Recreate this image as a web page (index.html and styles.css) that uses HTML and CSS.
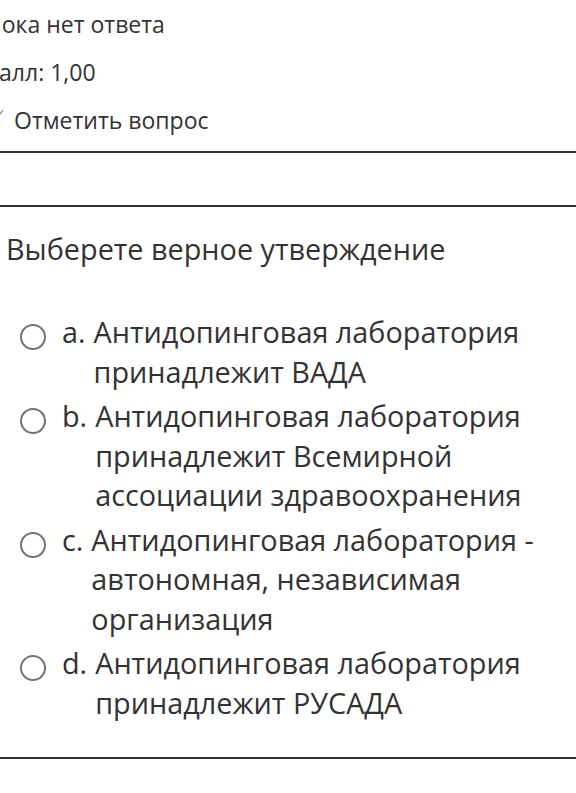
FILE: index.html
```html
<!DOCTYPE html>
<html lang="ru">
<head>
<meta charset="utf-8">
<link rel="stylesheet" href="styles.css">
</head>
<body>
<div class="info">
  <div class="state">Пока нет ответа</div>
  <div class="grade">Балл: 1,00</div>
  <div class="flag">
    <svg class="flag-icon" width="20" height="12" viewBox="0 0 20 12"><path d="M8 2 L12 9 L18 1" fill="none" stroke="#9a9a9a" stroke-width="1.4"/></svg>
    <span>Отметить вопрос</span>
  </div>
</div>
<div class="rule"></div>
<div class="gap"></div>
<div class="rule"></div>
<div class="content">
  <div class="qtext">Выберете верное утверждение</div>
  <div class="answers">
    <div class="option"><span class="radio"></span><span class="num">a.</span><div class="label">Антидопинговая лаборатория принадлежит ВАДА</div></div>
    <div class="option"><span class="radio"></span><span class="num">b.</span><div class="label">Антидопинговая лаборатория принадлежит Всемирной ассоциации здравоохранения</div></div>
    <div class="option"><span class="radio"></span><span class="num">c.</span><div class="label">Антидопинговая лаборатория - автономная, независимая организация</div></div>
    <div class="option"><span class="radio"></span><span class="num">d.</span><div class="label">Антидопинговая лаборатория принадлежит РУСАДА</div></div>
  </div>
</div>
<div class="rule"></div>
</body>
</html>
```
FILE: styles.css
```css
html, body {
  margin: 0;
  padding: 0;
  background: #fff;
}
body {
  font-family: "Open Sans", "Noto Sans", sans-serif;
  color: #333;
  overflow: hidden;
}
.info {
  margin-left: -15px;
  padding-top: 0;
  font-size: 23px;
  line-height: 48px;
  height: 151px;
}
.flag {
  display: flex;
  align-items: center;
}
.flag-icon {
  margin-right: 9px;
  margin-top: -10px;
}
.rule {
  height: 2px;
  background: #2f3431;
}
.gap {
  height: 52px;
}
.content {
  padding: 22px 0 0 6px;
  height: 550px;
  box-sizing: border-box;
}
.qtext {
  font-size: 28.8px;
  line-height: 40px;
  margin-bottom: 43px;
}
.answers {
  display: flex;
  flex-direction: column;
  gap: 5px;
  font-size: 28.8px;
  line-height: 39.5px;
  padding-left: 14px;
}
.option {
  display: flex;
  align-items: flex-start;
}
.radio {
  flex: none;
  width: 22px;
  height: 22px;
  border: 2px solid #737373;
  border-radius: 50%;
  margin-top: 12px;
  margin-right: 16px;
}
.num {
  flex: none;
  margin-right: 8px;
}
.label {
  max-width: 465px;
}
```
